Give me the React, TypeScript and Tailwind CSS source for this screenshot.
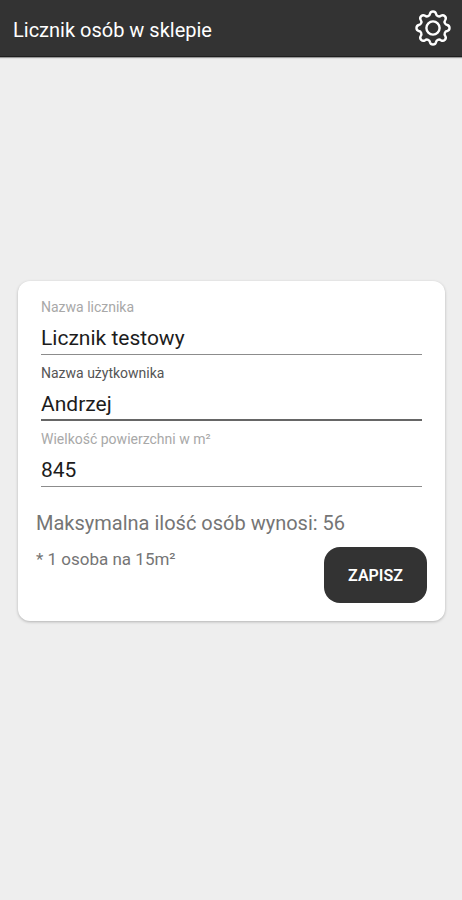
import { useState } from 'react';
import clsx from 'clsx';

const SQUARE_METERS_PER_PERSON = 15;

interface FieldProps {
  id: string;
  label: string;
  value: string;
  active: boolean;
  inputMode?: 'text' | 'numeric';
  onChange: (value: string) => void;
  onFocus: () => void;
}

const GearIcon: React.FC = () => (
  <svg viewBox="0 0 40 40" className="w-10 h-10" fill="none" stroke="currentColor" strokeWidth="2.4" strokeLinejoin="round">
    <path d="M17 5.8A3.1 3.1 0 0 1 23 5.8A3.1 3.1 0 0 0 27.9 7.8A3.1 3.1 0 0 1 32.2 12.1A3.1 3.1 0 0 0 34.2 17A3.1 3.1 0 0 1 34.2 23A3.1 3.1 0 0 0 32.2 27.9A3.1 3.1 0 0 1 27.9 32.2A3.1 3.1 0 0 0 23 34.2A3.1 3.1 0 0 1 17 34.2A3.1 3.1 0 0 0 12.1 32.2A3.1 3.1 0 0 1 7.8 27.9A3.1 3.1 0 0 0 5.8 23A3.1 3.1 0 0 1 5.8 17A3.1 3.1 0 0 0 7.8 12.1A3.1 3.1 0 0 1 12.1 7.8A3.1 3.1 0 0 0 17 5.8Z" />
    <circle cx="20" cy="20" r="6.6" />
  </svg>
);

const Field: React.FC<FieldProps> = ({ id, label, value, active, inputMode = 'text', onChange, onFocus }) => (
  <div className="flex flex-col">
    <label htmlFor={id} className={clsx('text-sm leading-4', active ? 'text-[#555555]' : 'text-[#a8a8a8]')}>
      {label}
    </label>
    <input
      id={id}
      type="text"
      inputMode={inputMode}
      value={value}
      onChange={(e) => onChange(e.target.value)}
      onFocus={onFocus}
      className={clsx(
        'w-full h-10 pt-[7px] bg-transparent text-[21px] text-[#1c1c1c] outline-none',
        active ? 'border-b-2 border-[#666666]' : 'border-b border-[#8c8c8c]'
      )}
    />
  </div>
);

export default function App() {
  const [counterName, setCounterName] = useState('Licznik testowy');
  const [userName, setUserName] = useState('Andrzej');
  const [area, setArea] = useState('845');
  const [activeField, setActiveField] = useState('user-name');

  const maxPeople = Math.floor((Number(area) || 0) / SQUARE_METERS_PER_PERSON);

  return (
    <div className="min-h-screen bg-[#eeeeee] font-[Roboto,sans-serif]">
      {/* App bar */}
      <header className="flex items-center justify-between h-[57px] pl-[13px] pr-[9px] bg-[#333333] border-b border-[#1f1f1f] text-white shadow-[0_1px_1px_#999999]">
        <h1 className="pt-1 text-xl">Licznik osób w sklepie</h1>
        <button type="button" aria-label="Ustawienia">
          <GearIcon />
        </button>
      </header>

      {/* Settings form */}
      <main className="pl-[18px] pr-[17px] pt-56">
        <form
          onSubmit={(e) => e.preventDefault()}
          className="p-[18px] bg-white rounded-xl shadow-[0_1px_3px_rgba(0,0,0,0.25)]"
        >
          <div className="flex flex-col gap-[10px] px-[5px]">
            <Field
              id="counter-name"
              label="Nazwa licznika"
              value={counterName}
              active={activeField === 'counter-name'}
              onChange={setCounterName}
              onFocus={() => setActiveField('counter-name')}
            />
            <Field
              id="user-name"
              label="Nazwa użytkownika"
              value={userName}
              active={activeField === 'user-name'}
              onChange={setUserName}
              onFocus={() => setActiveField('user-name')}
            />
            <Field
              id="area"
              label="Wielkość powierzchni w m²"
              value={area}
              active={activeField === 'area'}
              inputMode="numeric"
              onChange={setArea}
              onFocus={() => setActiveField('area')}
            />
          </div>

          <p className="mt-6 text-xl leading-6 text-[#757575]">Maksymalna ilość osób wynosi: {maxPeople}</p>
          <div className="flex items-start justify-between mt-3">
            <p className="text-[17px] leading-6 text-[#757575]">* 1 osoba na 15m²</p>
            <button
              type="submit"
              className="w-[103px] h-14 pt-[2px] rounded-2xl bg-[#333333] text-base font-semibold text-white"
            >
              ZAPISZ
            </button>
          </div>
        </form>
      </main>
    </div>
  );
}
